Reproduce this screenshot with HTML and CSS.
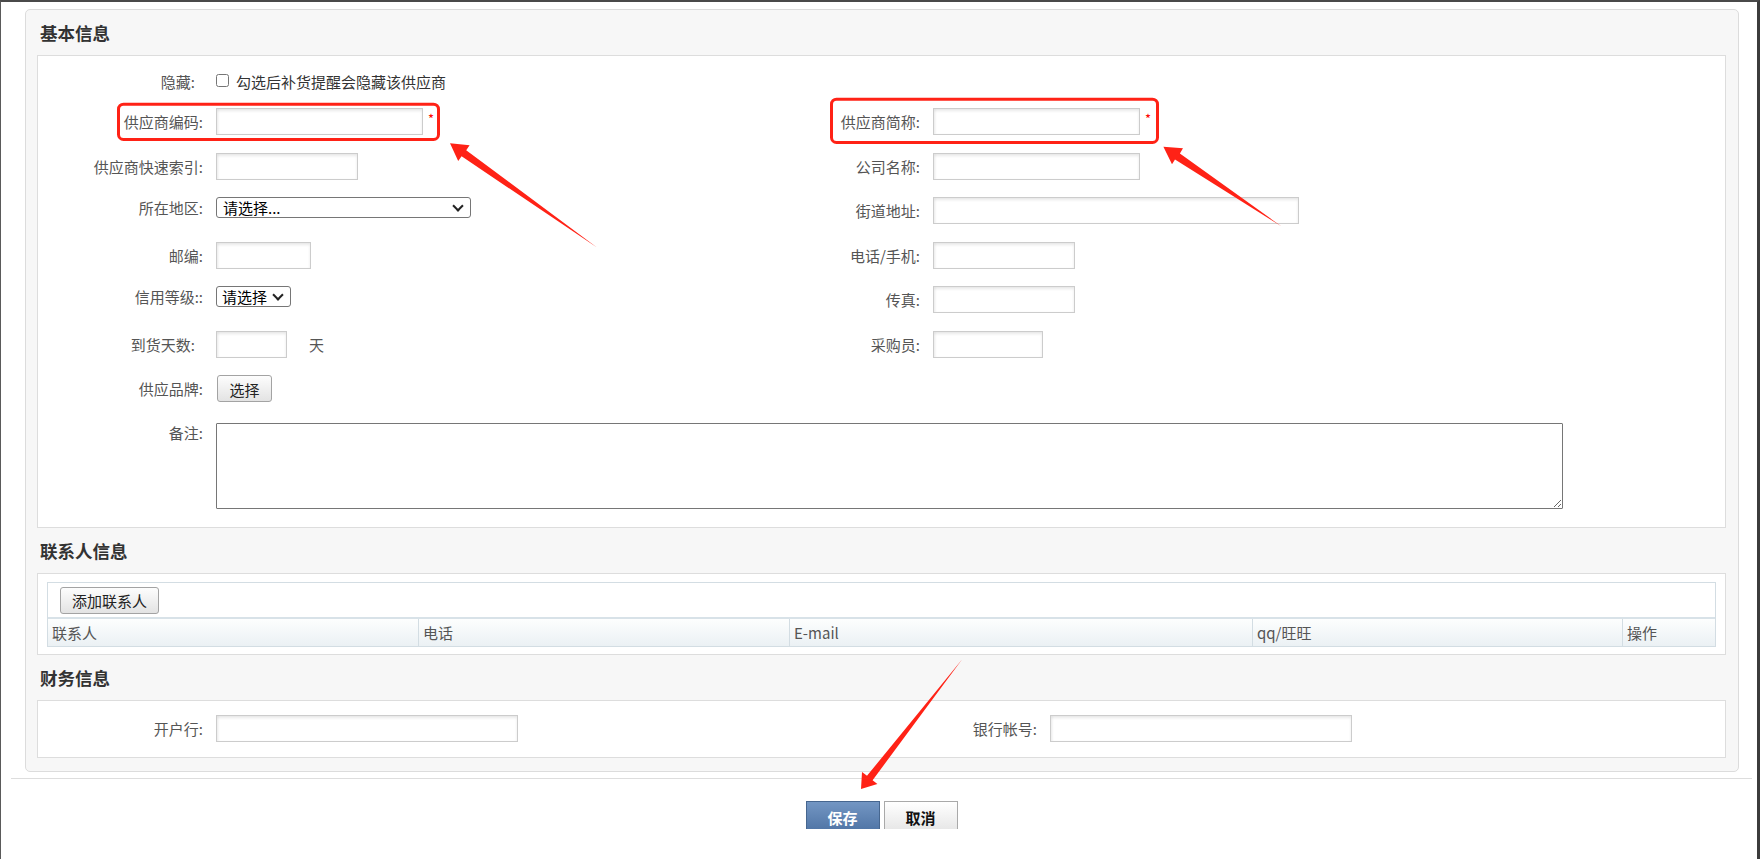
FILE: index.html
```html
<!DOCTYPE html>
<html lang="zh-CN">

<head>
    <meta charset="UTF-8">
    <meta name="viewport" content="width=device-width, initial-scale=1.0">
    <title>供应商信息</title>
    <link rel="stylesheet" href="styles.css">
</head>

<body>
    <div class="page">
        <div class="panel">
            <h2 class="panel-title">基本信息</h2>
            <div class="panel-box form-grid">
                <div class="form-label label-short">隐藏:</div>
                <div class="form-field span-3">
                    <label class="check"><input type="checkbox">勾选后补货提醒会隐藏该供应商</label>
                </div>

                <div class="form-label">供应商编码:</div>
                <div class="form-field"><input class="text-input input-207" type="text"><span class="required">*</span></div>
                <div class="form-label">供应商简称:</div>
                <div class="form-field"><input class="text-input input-207" type="text"><span class="required">*</span></div>

                <div class="form-label">供应商快速索引:</div>
                <div class="form-field"><input class="text-input input-142" type="text"></div>
                <div class="form-label">公司名称:</div>
                <div class="form-field"><input class="text-input input-207" type="text"></div>

                <div class="form-label label-select">所在地区:</div>
                <div class="form-field">
                    <span class="select-wrap">
                        <select class="select select-region">
                            <option>请选择...</option>
                        </select>
                    </span>
                </div>
                <div class="form-label">街道地址:</div>
                <div class="form-field"><input class="text-input input-366" type="text"></div>

                <div class="form-label">邮编:</div>
                <div class="form-field"><input class="text-input input-95" type="text"></div>
                <div class="form-label">电话/手机:</div>
                <div class="form-field"><input class="text-input input-142" type="text"></div>

                <div class="form-label label-select">信用等级::</div>
                <div class="form-field">
                    <span class="select-wrap">
                        <select class="select select-credit">
                            <option>请选择</option>
                        </select>
                    </span>
                </div>
                <div class="form-label">传真:</div>
                <div class="form-field"><input class="text-input input-142" type="text"></div>

                <div class="form-label label-short">到货天数:</div>
                <div class="form-field"><input class="text-input input-71" type="text"><span class="unit">天</span></div>
                <div class="form-label">采购员:</div>
                <div class="form-field"><input class="text-input input-110" type="text"></div>

                <div class="form-label">供应品牌:</div>
                <div class="form-field span-3"><button class="btn" type="button">选择</button></div>

                <div class="form-label label-top">备注:</div>
                <div class="form-field span-3"><textarea class="remark"></textarea></div>
            </div>

            <h2 class="panel-title">联系人信息</h2>
            <div class="panel-box contact-box">
                <div class="contact-list">
                    <div class="contact-toolbar">
                        <button class="btn btn-add" type="button">添加联系人</button>
                    </div>
                    <div class="contact-head">
                        <div>联系人</div>
                        <div>电话</div>
                        <div>E-mail</div>
                        <div>qq/旺旺</div>
                        <div>操作</div>
                    </div>
                </div>
            </div>

            <h2 class="panel-title">财务信息</h2>
            <div class="panel-box finance-grid">
                <div class="form-label">开户行:</div>
                <div class="form-field"><input class="text-input input-302" type="text"></div>
                <div class="form-label">银行帐号:</div>
                <div class="form-field"><input class="text-input input-302" type="text"></div>
            </div>
        </div>

        <div class="actions">
            <button class="action-btn action-save" type="button">保存</button>
            <button class="action-btn action-cancel" type="button">取消</button>
        </div>
    </div>

    <!-- annotation marks drawn over the page -->
    <svg class="marks" width="1760" height="859" viewBox="0 0 1760 859">
        <rect x="118.5" y="104.2" width="320" height="35.3" rx="5" fill="none" stroke="#ff2216" stroke-width="3" />
        <rect x="831.5" y="99.2" width="326" height="43.3" rx="5" fill="none" stroke="#ff2216" stroke-width="3" />
        <polygon points="450,143.3 469.6,145.2 466.2,150.2 597,247.6 461.6,156.3 458.2,161" fill="#ff2216" />
        <polygon points="1163.4,146.7 1183,148.2 1179.9,153.4 1281.3,226.3 1175,159.5 1172,164.3" fill="#ff2216" />
        <polygon points="861,789 862,772 867,775.8 962,659.6 872.6,780.2 877.4,784" fill="#ff2216" />
    </svg>
</body>

</html>
```

FILE: styles.css
```css
* {
    margin: 0;
    padding: 0;
    box-sizing: border-box;
}

html,
body {
    height: 100%;
}

body {
    font-family: "Noto Sans CJK SC", "Microsoft YaHei", sans-serif;
    font-size: 15px;
    color: #555;
    background: #fff;
    border-top: 2px solid #4a4a4a;
    border-left: 1px solid #5a5a5a;
    border-right: 3px solid #3c3c3c;
    overflow: hidden;
}

.page {
    padding: 7px 5px 0 10px;
}

.panel {
    margin: 0 13px 0 14px;
    padding: 0 12px 13px 11px;
    background: #f7f7f7;
    border: 1px solid #dcdcdc;
    border-radius: 5px;
}

.panel-title {
    height: 45px;
    line-height: 45px;
    padding-left: 3px;
    font-size: 17.5px;
    font-weight: bold;
    color: #333;
}

.panel-box {
    background: #fff;
    border: 1px solid #ddd;
}

/* basic info */
.form-grid {
    display: grid;
    grid-template-columns: 178px 539px 178px 1fr;
    grid-template-rows: 40.5px repeat(6, 44.5px) 48px 86px;
    align-items: start;
    padding: 11.5px 0 18px;
}

.form-label {
    text-align: right;
    padding-right: 13px;
    line-height: 27px;
    white-space: nowrap;
}

.form-label.label-short {
    padding-right: 21px;
}

.form-label.label-select {
    line-height: 21px;
}

.form-label.label-top {
    line-height: 20px;
}

.form-field {
    display: flex;
    align-items: flex-start;
    line-height: 27px;
}

.form-field.span-3 {
    grid-column: span 3;
}

.check {
    display: flex;
    align-items: center;
    height: 27px;
    color: #333;
}

.check input {
    width: 13px;
    height: 13px;
    margin: -2px 7px 0 0;
}

.text-input {
    height: 27px;
    padding: 0 4px;
    border: 1px solid #ccc;
    box-shadow: inset 0 2px 3px rgba(0, 0, 0, .09), inset 2px 0 2px rgba(0, 0, 0, .03);
    background: #fff;
    font: inherit;
    color: #333;
    outline: none;
}

.input-71 { width: 71px; }
.input-95 { width: 95px; }
.input-110 { width: 110px; }
.input-142 { width: 142px; }
.input-207 { width: 207px; }
.input-302 { width: 302px; }
.input-366 { width: 366px; }

.required {
    margin-left: 5px;
    line-height: 22px;
    font-size: 13px;
    color: #f00;
}

.unit {
    margin-left: 22px;
    line-height: 28px;
}

.select-wrap {
    position: relative;
    display: block;
    height: 21px;
}

.select-wrap::after {
    content: "";
    position: absolute;
    right: 9px;
    top: 5px;
    width: 6px;
    height: 6px;
    border-right: 2px solid #222;
    border-bottom: 2px solid #222;
    transform: rotate(45deg);
    pointer-events: none;
}

.select {
    display: block;
    height: 21px;
    padding: 0 0 0 6px;
    appearance: none;
    -webkit-appearance: none;
    font-family: inherit;
    font-size: 15px;
    line-height: 19px;
    color: #000;
    background: #fff;
    border: 1px solid #767676;
    border-radius: 3px;
    outline: none;
}

.select-region {
    width: 255px;
}

.select-credit {
    width: 75px;
    padding-left: 5px;
}

.btn {
    height: 27px;
    padding: 0 12px;
    font: inherit;
    color: #222;
    background: linear-gradient(#fdfdfd, #e3e3e3);
    border: 1px solid #a3a3a3;
    border-radius: 3px;
}

.form-field .btn {
    width: 55px;
    padding: 0;
    margin-left: 1px;
}

.remark {
    width: 1347px;
    height: 86px;
    font: inherit;
    border: 1px solid #767676;
    border-radius: 1px;
}

/* contacts */
.contact-box {
    padding: 8px 9px 7px;
}

.contact-list {
    border: 1px solid #d3dde3;
}

.contact-toolbar {
    height: 34px;
    padding: 4px 12px 0;
}

.btn-add {
    width: 99px;
    padding: 0;
}

.contact-head {
    display: grid;
    grid-template-columns: 370px 371px 463px 370px 1fr;
    height: 29px;
    border-top: 2px solid #d8e2e8;
    background: linear-gradient(#fdfefe, #ebf1f4);
}

.contact-head div {
    padding-left: 4px;
    line-height: 27px;
    border-left: 1px solid #d3dde3;
}

.contact-head div:first-child {
    border-left: none;
}

/* finance */
.finance-grid {
    display: grid;
    grid-template-columns: 178px 656px 178px 1fr;
    padding: 14px 0 15px;
}

/* bottom buttons */
.actions {
    height: 51px;
    margin-top: 6px;
    padding-top: 22px;
    border-top: 1px solid #ddd;
    text-align: center;
    font-size: 0;
    overflow: hidden;
}

.action-btn {
    width: 74px;
    height: 33px;
    margin: 0 2px;
    font-family: inherit;
    font-size: 15px;
    font-weight: bold;
    vertical-align: top;
}

.action-save {
    color: #fff;
    background: linear-gradient(#7396c3, #4d72a3);
    border: 1px solid #46668f;
}

.action-cancel {
    color: #111;
    background: linear-gradient(#fff, #e4e4e4);
    border: 1px solid #a9a9a9;
}

.marks {
    position: absolute;
    top: 0;
    left: 0;
    pointer-events: none;
}
```
